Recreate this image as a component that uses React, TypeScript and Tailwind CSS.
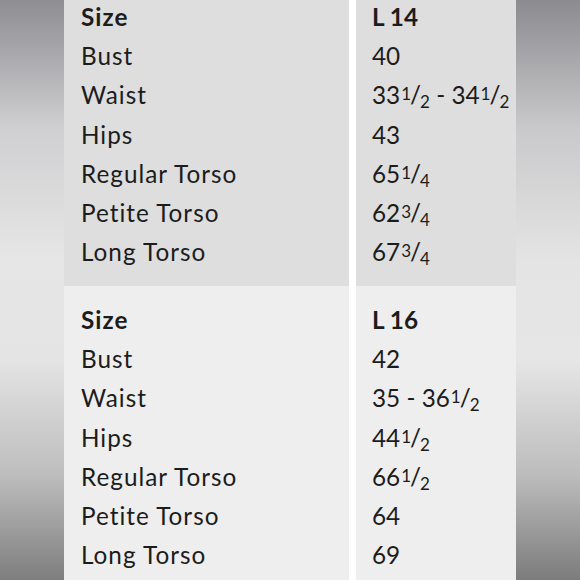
import React from "react";

type Row = { label: string; value: React.ReactNode; bold?: boolean };

function Frac({ n, d }: { n: string; d: string }) {
  return (
    <span>
      <span className="relative top-[-4px] text-[17px] ml-[1px]">{n}</span>
      <span className="-ml-[1px]">/</span>
      <span className="relative top-[4px] text-[17px] -ml-[1px]">{d}</span>
    </span>
  );
}

const l14: Row[] = [
  { label: "Size", value: "L 14", bold: true },
  { label: "Bust", value: "40" },
  { label: "Waist", value: <>33<Frac n="1" d="2" /> - 34<Frac n="1" d="2" /></> },
  { label: "Hips", value: "43" },
  { label: "Regular Torso", value: <>65<Frac n="1" d="4" /></> },
  { label: "Petite Torso", value: <>62<Frac n="3" d="4" /></> },
  { label: "Long Torso", value: <>67<Frac n="3" d="4" /></> },
];

const l16: Row[] = [
  { label: "Size", value: "L 16", bold: true },
  { label: "Bust", value: "42" },
  { label: "Waist", value: <>35 - 36<Frac n="1" d="2" /></> },
  { label: "Hips", value: <>44<Frac n="1" d="2" /></> },
  { label: "Regular Torso", value: <>66<Frac n="1" d="2" /></> },
  { label: "Petite Torso", value: "64" },
  { label: "Long Torso", value: "69" },
];

function Panel({ rows, bg, top }: { rows: Row[]; bg: string; top: string }) {
  return (
    <div className="grid grid-cols-[285px_160px] gap-x-[7px] bg-white">
      <div className={`${bg} pl-[17px] overflow-hidden tracking-[1px]`}>
        <div className={top}>
          {rows.map((r, i) => (
            <div key={i} className={`h-[39.2px] leading-[39.2px] whitespace-nowrap ${r.bold ? "font-bold" : ""}`}>
              {r.label}
            </div>
          ))}
        </div>
      </div>
      <div className={`${bg} pl-[16px] overflow-hidden`}>
        <div className={top}>
          {rows.map((r, i) => (
            <div key={i} className={`h-[39.2px] leading-[39.2px] whitespace-nowrap ${r.bold ? "font-bold" : ""}`}>
              {r.value}
            </div>
          ))}
        </div>
      </div>
    </div>
  );
}

export default function App() {
  return (
    <div
      className="w-[580px] h-[580px] flex overflow-hidden text-[24.3px] text-[#1c1c1c]"
      style={{ fontFamily: "Lato, 'Open Sans', sans-serif" }}
    >
      <div className="w-[64px] h-full bg-[linear-gradient(180deg,#8d8d92_0%,#cfcfd1_22%,#e6e6e6_45%,#e4e4e4_62%,#bdbdbd_82%,#7e7e7e_100%)]" />
      <div className="w-[452px] h-full flex flex-col">
        <Panel rows={l14} bg="bg-[#dedede] h-[286px]" top="-mt-[3px]" />
        <Panel rows={l16} bg="bg-[#eeeeee] h-[294px]" top="pt-[14px]" />
      </div>
      <div className="w-[64px] h-full bg-[linear-gradient(180deg,#8b8b90_0%,#c9c9cb_22%,#e4e4e4_45%,#e6e6e6_62%,#bcbcbc_82%,#7c7c7c_100%)]" />
    </div>
  );
}
